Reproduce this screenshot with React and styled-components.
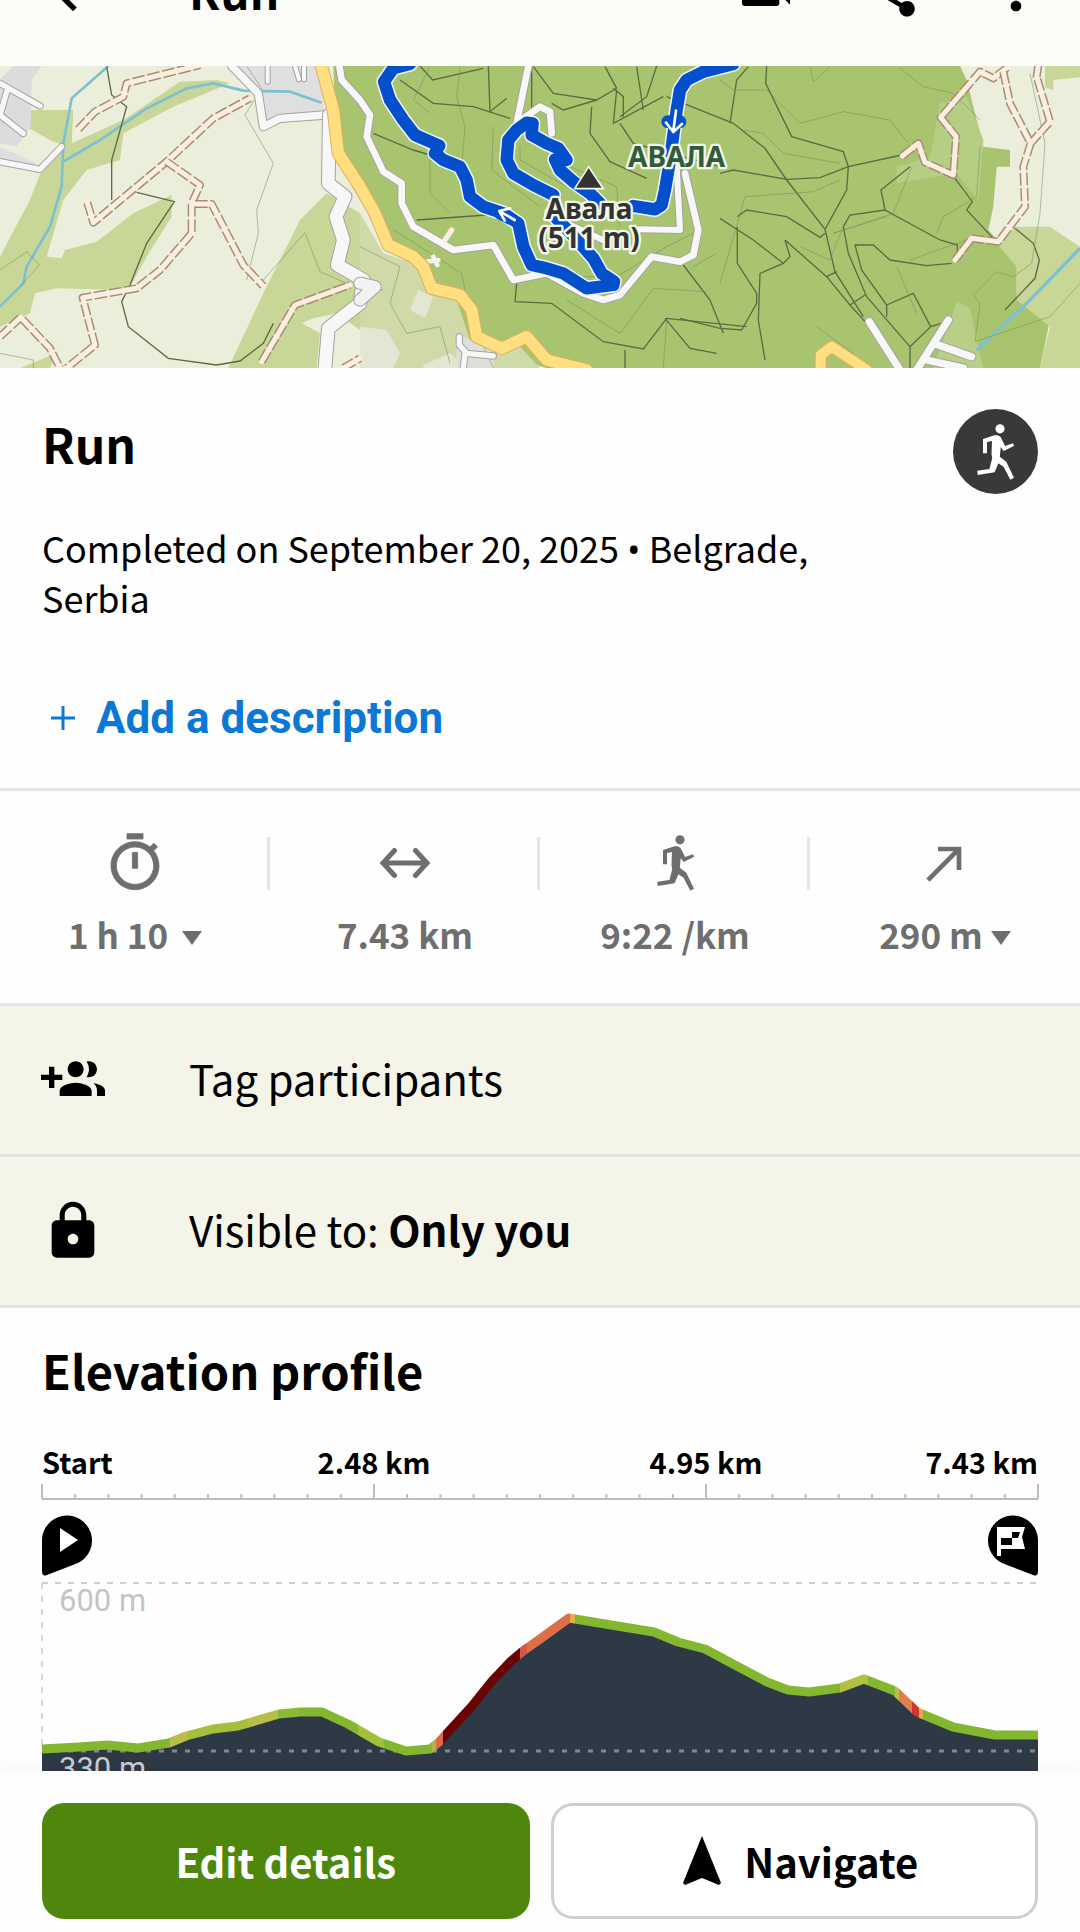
import React from 'react';
import styled, { createGlobalStyle } from 'styled-components';
import {
  MdArrowBack,
  MdVideocam,
  MdShare,
  MdMoreVert,
} from 'react-icons/md';

const GlobalStyle = createGlobalStyle`
  * {
    box-sizing: border-box;
  }
  body {
    margin: 0;
    background: #fefefe;
    color: #000;
    font-family: "Noto Sans CJK SC", "Noto Sans", sans-serif;
  }
  button {
    margin: 0;
    padding: 0;
    border: 0;
    background: none;
    color: inherit;
    font: inherit;
    cursor: pointer;
  }
  h1, h2, p, ul {
    margin: 0;
    padding: 0;
  }
  svg {
    display: block;
  }
`;

const Screen = styled.div`
  display: flex;
  flex-direction: column;
  height: 100vh;
`;

const TopBar = styled.header`
  flex: none;
  display: flex;
  align-items: flex-end;
  height: 66px;
  padding: 0 32px 44px 41px;
  background: #fdfcf9;
  overflow: hidden;
`;

const BarTitle = styled.p`
  flex: 1;
  padding-left: 84px;
  font-size: 46px;
  line-height: 64px;
  font-weight: 700;
`;

const BarActions = styled.div`
  display: flex;
  gap: 61px;
`;

const Content = styled.main`
  flex: 1;
  min-height: 0;
  overflow: hidden;
`;

const MapSvg = styled.svg`
  width: 100%;
  height: auto;
`;

const Summary = styled.section`
  padding: 41px 42px 42px;
  border-bottom: 3px solid #e5e5e5;
`;

const TitleRow = styled.div`
  display: flex;
  justify-content: space-between;
  align-items: flex-start;
`;

const Title = styled.h1`
  font-size: 48px;
  line-height: 68px;
  font-weight: 700;
`;

const Badge = styled.span`
  display: flex;
  align-items: center;
  justify-content: center;
  width: 85px;
  height: 85px;
  border-radius: 50%;
  background: #393939;
  color: #fff;
`;

const Subtitle = styled.p`
  max-width: 800px;
  margin-top: 28px;
  font-size: 36px;
  line-height: 50px;
`;

const Dot = styled.span`
  font-family: "Open Sans", sans-serif;
  line-height: 1;
`;

const AddButton = styled.button`
  display: flex;
  align-items: center;
  gap: 20px;
  margin-top: 68px;
  padding-left: 8px;
  color: #0b78d6;
  font-family: Roboto, sans-serif;
  font-size: 44px;
  line-height: 56px;
  font-weight: 700;
`;

const Stats = styled.ul`
  display: grid;
  grid-template-columns: repeat(4, 1fr);
  padding: 40px 0 36px;
  border-bottom: 3px solid #e5e5e5;
  list-style: none;
  color: #6e6e6e;
`;

const Stat = styled.li`
  display: flex;
  flex-direction: column;
  align-items: center;
`;

const StatIcon = styled.div`
  display: flex;
  align-items: center;
  justify-content: center;
  align-self: stretch;
  height: 64px;
  background: ${({ $last }) =>
    $last
      ? 'none'
      : 'linear-gradient(#e5e5e5, #e5e5e5) right center / 3px 53px no-repeat'};
`;

const StatValue = styled.div`
  display: flex;
  align-items: center;
  gap: ${({ $gap }) => $gap || 0}px;
  margin-top: 6px;
  font-size: 35px;
  line-height: 66px;
  font-weight: 700;

  svg {
    margin-top: 8px;
  }
`;

const OptionRow = styled.button`
  display: flex;
  align-items: center;
  gap: 84px;
  width: 100%;
  padding: 42px 41px;
  border-bottom: 3px solid #e4e4de;
  background: #f4f4e8;
  font-size: 42px;
  line-height: 60px;
  text-align: left;
`;

const OptionText = styled.span`
  padding-bottom: 4px;
`;

const Elevation = styled.section`
  padding: 28px 42px 0;
`;

const SectionTitle = styled.h2`
  margin-bottom: 36px;
  font-size: 47px;
  line-height: 68px;
  font-weight: 700;
`;

const ChartSvg = styled.svg`
  width: 100%;
  height: auto;
  overflow: visible;
`;

const AxisLabel = styled.text`
  font-size: 29px;
  font-weight: 700;
`;

const LevelLabel = styled.text`
  font-family: Roboto, sans-serif;
  font-size: 31px;
  fill: ${({ $inside }) => ($inside ? '#c9cdd0' : '#c4c4c4')};
`;

const Markers = styled.div`
  display: flex;
  justify-content: space-between;
  margin: 15px 0 3px;
`;

const Footer = styled.footer`
  flex: none;
  display: grid;
  grid-template-columns: 1fr 1fr;
  gap: 21px;
  padding: 32px 42px 13px;
  background: #fefefe;
  box-shadow: 0 -4px 12px rgba(0, 0, 0, 0.03);
`;

const FooterButton = styled.button`
  display: flex;
  align-items: center;
  justify-content: center;
  gap: 22px;
  height: 116px;
  border-radius: 22px;
  font-size: 40px;
  font-weight: 700;
`;

const PrimaryButton = styled(FooterButton)`
  background: #4f870d;
  color: #fff;
`;

const OutlineButton = styled(FooterButton)`
  padding-left: 12px;
  border: 3px solid #cfcfcf;
  background: #fff;
`;

const MapLabel = styled.text`
  font-family: "Noto Sans", sans-serif;
  font-weight: 700;
  font-size: 84px;
  text-anchor: middle;
  paint-order: stroke;
  stroke: #f4f7ea;
  stroke-width: 14px;
  stroke-linejoin: round;
  fill: ${({ $fill }) => $fill};
`;

const RunnerIcon = () => (
  <svg width="37" height="56" viewBox="0 0 37 56" fill="currentColor">
    <circle cx="23" cy="4.8" r="4.6" />
    <path d="M6 15 17.5 11.3 20.5 11.3 23.4 12.7 26 17.7 28 22 36 19.3 37 22 26.5 27 23.8 23 22.8 32.7 29.3 37.7 37 53.7 33.4 55.7 26.5 42.7 21.4 39.3 17.6 48.3 .7 51 .3 46.7 12.4 45 15.2 34.3 14.5 30 15 17 10 18 10 29.3 6 29.3Z" />
  </svg>
);

const TimerIcon = () => (
  <svg width="64" height="64" viewBox="0 0 24 24" fill="currentColor" stroke="currentColor" strokeWidth="0.3">
    <path d="M15 1H9v2h6V1zm-4 13h2V8h-2v6zm8.03-6.61 1.42-1.42c-.43-.51-.9-.99-1.41-1.41l-1.42 1.42C16.07 4.74 14.12 4 12 4c-4.97 0-9 4.03-9 9s4.02 9 9 9 9-4.03 9-9c0-2.12-.74-4.07-1.97-5.61zM12 20c-3.87 0-7-3.13-7-7s3.13-7 7-7 7 3.13 7 7-3.13 7-7 7z" />
  </svg>
);

const DistanceIcon = () => (
  <svg width="52" height="32" viewBox="0 0 52 32" fill="none" stroke="currentColor" strokeWidth="5" strokeLinecap="round">
    <path d="M6 16H46M15.5 3.5 4 16 15.5 28.5M36.5 3.5 48 16 36.5 28.5" />
  </svg>
);

const ClimbIcon = () => (
  <svg width="56" height="56" viewBox="0 0 24 24" fill="currentColor">
    <path d="M9 5v2h6.59L4 18.59 5.41 20 17 8.41V15h2V5z" />
  </svg>
);

const Caret = () => (
  <svg width="20" height="14" viewBox="0 0 20 14" fill="currentColor">
    <path d="M0 0H20L10 14Z" />
  </svg>
);

const PlusIcon = () => (
  <svg width="26" height="26" viewBox="0 0 26 26" fill="none" stroke="currentColor" strokeWidth="3">
    <path d="M13 1V25M1 13H25" />
  </svg>
);

const TagPeopleIcon = () => (
  <svg width="64" height="64" viewBox="0 0 24 24">
    <path d="M8 10H5V7H3v3H0v2h3v3h2v-3h3v-2zm10 1c1.66 0 2.99-1.34 2.99-3S19.66 5 18 5c-.32 0-.63.05-.91.14.57.81.9 1.79.9 2.86s-.34 2.04-.9 2.86c.28.09.59.14.91.14zm-5 0c1.66 0 2.99-1.34 2.99-3S14.66 5 13 5s-3 1.34-3 3 1.34 3 3 3zm6.62 2.16c.83.73 1.38 1.66 1.38 2.84v2h3v-2c0-1.54-2.37-2.49-4.38-2.84zM13 13c-2 0-6 1-6 3v2h12v-2c0-2-4-3-6-3z" />
  </svg>
);

const LockIcon = () => (
  <svg width="64" height="64" viewBox="0 0 24 24">
    <path d="M18 8h-1V6c0-2.76-2.24-5-5-5S7 3.24 7 6v2H6c-1.1 0-2 .9-2 2v10c0 1.1.9 2 2 2h12c1.1 0 2-.9 2-2V10c0-1.1-.9-2-2-2zm-6 9c-1.1 0-2-.9-2-2s.9-2 2-2 2 .9 2 2-.9 2-2 2zm3.1-9H8.9V6c0-1.71 1.39-3.1 3.1-3.1 1.71 0 3.1 1.39 3.1 3.1v2z" />
  </svg>
);

const StartPin = () => (
  <svg width="51" height="61" viewBox="0 0 51 61">
    <path d="M0 25a25 25 0 1 1 36 23L5 60Q0 62 0 56Z" />
    <path d="M18 13 36 25 18 37Z" fill="#fff" />
  </svg>
);

const FinishPin = () => (
  <svg width="51" height="61" viewBox="0 0 51 61">
    <path d="M51 25a25 25 0 1 0-36 23L46 60Q51 62 51 56Z" />
    <path d="M10 12H38L35 22 38 34H14V41H10Z" fill="#fff" />
    <path d="M25 17H33L31 23H25ZM14 23H25V30H14Z" />
  </svg>
);

const NavigateIcon = () => (
  <svg width="40" height="50" viewBox="0 0 40 50">
    <path d="M20 0 39 47 37 49 20 42 3 49 1 47Z" />
  </svg>
);

/* Map layers. Units are a third of a css pixel. */

const FIELDS = '#ebeedb';
const WOOD = '#c8d798';
const FOREST = '#a9c46f';

const woods = [
  'M75 330H220L215 430 370 360 540 245 650 240 690 250 520 320 370 400 360 480 260 510 190 600 140 770 185 775 195 750 290 725 400 640 515 585 515 650 440 770 390 860 370 870 170 865 105 880 90 940 0 980V770L90 600 125 510 200 440 150 420 60 370Z',
  'M980 580 1080 640V990L1010 940 940 955 905 970 960 1000 950 1104H685L790 880 900 660Z',
  'M60 1104 170 1060 150 1104Z',
];

const tracks = [
  'M235 388 285 335 370 290 380 250 600 195',
  'M262 608 280 668 500 485 640 355 750 295',
  'M500 485 600 555 575 610 575 700 480 810 410 865 248 893 285 1035 200 1104',
  'M585 612 635 612 730 795 790 858',
  'M0 1010 62 952 150 1045 180 1104',
  'M785 1085 885 915 1050 855',
  'M1030 1104 1080 1075',
];

const tracksEast = [
  'M547 468 595 430 615 487 700 525 708 410 662 352 780 215 820 235 865 200',
  'M850 215 870 310 932 430 990 365 950 230 955 195',
  'M932 430 910 500 915 620 835 725 755 715 705 780',
];

const roads = [
  { d: 'M0 250 120 318M20 275 0 345 70 400M0 485 120 508 185 440', w: 16 },
  { d: 'M695 198 775 280 790 380 840 355 975 345', w: 22 },
  { d: 'M803 198V245M885 198 897 238M912 198V238', w: 12 },
  { d: 'M988 345 985 550 1035 590 1008 650 1030 720 1012 795 1090 840 1080 910 985 985 975 1104', w: 38 },
  { d: 'M1018 198 1025 240 1080 300 1110 345 1100 410 1150 515 1205 550 1205 610 1240 680 1360 750 1480 735 1540 840 1640 820 1750 880 1810 900 1860 885 1955 770 2040 785 2080 765 2095 690 2055 520', w: 20 },
  { d: 'M1585 198 1550 370 1620 320 1650 335 1655 400', w: 20 },
  { d: 'M2030 500 2040 690 1920 688M1700 670 1820 725', w: 18 },
];

const footpaths = [
  'M320 200 335 285 380 320 335 480V600M410 577 523 605 440 730 390 855 365 905 385 980 505 1075 650 1095 720 1083 790 1030 820 970',
  'M1200 240 1300 310 1420 320 1530 355M1120 400 1240 450 1290 465M1250 660 1460 645M1260 198 1298 240 1450 205',
  'M1465 198 1470 335 1520 295M1595 198V400M1600 200 1660 280 1790 300 1850 265 1815 200M1790 300 1690 330 1655 310',
  'M1850 270 1840 370 1990 290M1840 265 1870 290 1870 350M1910 200 1930 330M1970 198 1940 290 1860 350',
  'M1775 320 1770 400 1830 485 1940 535M1860 370 1900 430 2160 500',
  'M1550 850 1545 905 1655 910 1810 1025 1930 1047 2000 955 2240 980M1995 955 2070 1045 2150 1060M2050 795 2130 900 2170 1000M1875 1050V1104',
  'M2000 290 2200 370 2295 445 2360 540 2475 688 2505 815 2590 950M2190 370 2210 240 2245 200M2300 198 2297 250 2375 410 2530 455 2545 500 2540 570 2475 688',
  'M2160 520 2200 510 2360 538 2460 533 2545 500 2705 465M2160 655 2260 720 2350 790M2212 680V790L2270 880V910L2225 990 2160 985',
  'M2212 650 2240 630 2360 650 2460 712 2475 700M2355 720 2370 770 2350 790 2280 820 2275 960 2295 1080M2355 720 2480 830 2550 915 2595 965M2480 830 2510 815M2550 915 2595 885',
  'M2865 535 2917 605 2900 630 2980 715M2730 500 2643 570 2655 630 2820 720 2872 735V760M2655 630 2550 645 2530 680 2545 760 2600 890 2730 1040V1104M2855 790 2780 797 2670 780 2620 735H2565L2585 810 2660 915V950M2660 915 2740 880 2792 980 2730 1040M2792 980 2840 965',
  'M3045 685 3100 730 3118 780 3105 835 3015 930M2040 955 2160 985',
];

const faintPaths = [
  'M740 198 785 265 735 345 820 490 770 630 775 700 740 840M790 840 915 698 960 815 1040 850M0 810 80 755 118 795 60 860M0 1060 100 1080V1104',
  'M1380 200 1370 290 1395 380 1385 500M1290 200 1240 300 1290 340M1480 380 1475 510 1620 620M1290 460V580L1350 640M1560 440 1560 480 1700 560M1640 470 1850 560 1860 680',
  'M1180 690 1260 740 1385 820 1410 950 1480 1104M1670 830 1850 830 2000 740 2080 700M1700 900 1860 1000 1960 865 2120 875M2080 800 2150 760',
  'M1080 740 1200 800 1170 910 1220 1000 1320 980 1350 1090M2000 960 1990 1104M1080 860 1150 870',
  'M2160 240 2200 270H2300L2400 370 2530 335 2670 360 2725 430M2230 390 2290 400 2350 460 2520 490M2430 200 2440 245 2490 200M2700 205 2770 260 2860 280 2940 360M2235 590 2440 575 2520 540',
  'M2160 850 2235 590M2940 440 2930 590 2830 650 2810 700M2735 500 2680 640 2500 700 2660 650M2690 800 2750 940M3090 220 3135 430 3120 640 3095 790 3040 830 2990 815 2920 885 2940 910 2925 1025 3150 950 3240 850',
  'M2400 740 2490 780 2530 680M2450 980 2560 1060M2900 720 2730 780',
];

const Cased = ({ d, width, color, casing }) => (
  <>
    <path d={d} stroke={casing} strokeWidth={width + 6} />
    <path d={d} stroke={color} strokeWidth={width} />
  </>
);

const Track = ({ d }) => (
  <>
    <path d={d} stroke="#a68d72" strokeWidth="24" strokeDasharray="38 8" strokeLinecap="butt" />
    <path d={d} stroke="#fbeee0" strokeWidth="15" />
  </>
);

const routes = [
  'M1230 192 1180 205 1152 245 1170 300 1210 360 1245 405 1290 425 1318 437 1305 460 1330 480 1380 500 1400 540 1410 590 1450 620 1510 640 1555 670 1570 740 1595 795 1640 805 1690 820 1760 865 1840 855 1842 845 1805 820 1780 775 1740 730 1655 640',
  'M1660 585 1600 555 1540 520 1520 480 1525 420 1550 390 1580 368 1598 370 1595 405 1640 430 1675 445 1700 480 1665 478 1680 510 1720 545 1770 580 1800 610',
  'M2200 192 2110 215 2060 240 2040 270 2030 330 2010 480 1995 570 1985 615 1965 628 1900 618',
];

function TrailMap() {
  return (
    <MapSvg viewBox="0 198 3240 906" role="img" aria-label="Route map">
      <rect y="198" width="3240" height="906" fill={FIELDS} />
      {woods.map(d => (
        <path key={d} d={d} fill={WOOD} />
      ))}
      <path d="M40 198H125L95 240 92 380 50 440 0 430V240Z" fill="#dcdcdc" />
      <path d="M0 440 110 490 95 505 0 490ZM690 198H950L975 335 800 375 780 290Z" fill="#dfdfdf" />

      <path d="M1000 198H2880L2900 240 2950 440 3030 450V500H2990L2980 620 2965 690 3010 740 3050 800V880L3150 960 3120 1104H1640L1420 1040 1280 870 1200 760 1080 600 1010 480Z" fill={FOREST} />
      <path d="M1080 640 1150 760 1240 790 1290 870 1370 900 1420 1050 1560 1040 1620 1104H1080Z" fill="#cfdaa8" />
      <path d="M1080 980 1160 990 1200 1060 1180 1104H1080ZM1255 870 1300 890 1275 955 1230 930ZM1270 1095 1350 1060 1400 1104H1270Z" fill="#e4e6d3" />
      <path d="M1370 1000 1480 1055V1104H1370Z" fill="#dedfd8" />
      <path d="M3045 680H3150L3240 740V1104H3120L3150 980 3050 900V800L2990 730Z" fill={WOOD} />
      <path d="M3135 198H3240V232L3160 240V270L3135 262Z" fill={WOOD} />
      <path d="M2820 310 2900 290 2950 420 2935 600 2870 520 2690 550 2690 500 2790 470Z" fill="#b5ce83" />
      <path d="M2870 905 2910 925 2925 1000 2950 1104H2800Z" fill="#b9cf88" />

      <g fill="none" stroke="#7cc0d2">
        <path d="M325 198 215 295 190 430 185 560 150 680 80 800 70 850 0 920" strokeWidth="8" />
        <path d="M190 485 300 420 440 325 560 265 640 250 730 272 870 275 965 308" strokeWidth="8" />
        <path d="M3240 745 3080 910 2930 1050" strokeWidth="10" />
      </g>

      <g fill="none" stroke="#5c6b42" strokeWidth="4">
        {footpaths.map(d => (
          <path key={d} d={d} />
        ))}
      </g>
      <g fill="none" stroke="#7d8a5e" strokeWidth="2" opacity="0.8">
        {faintPaths.map(d => (
          <path key={d} d={d} />
        ))}
      </g>

      <g fill="none" strokeLinecap="round" strokeLinejoin="round">
        {tracks.map(d => (
          <Track key={d} d={d} />
        ))}
        <g transform="translate(2160)">
          {tracksEast.map(d => (
            <Track key={d} d={d} />
          ))}
        </g>
        {roads.map(({ d, w }) => (
          <Cased key={d} d={d} width={w} color="#f7f7f7" casing="#a3a3a3" />
        ))}
        <Cased
          d="M2608 965 2700 1110M2845 960 2750 1110M2800 1030 2915 1070M2780 1080 2890 1104"
          width={22}
          color="#f7f7f7"
          casing="#a3a3a3"
        />
        <Cased d="M1378 1010V1035L1400 1060 1480 1068M1395 1060 1390 1104" width={16} color="#f7f7f7" casing="#a3a3a3" />
        <Cased d="M1080 850 1125 860 1080 900" width={34} color="#f2f2f2" casing="#a3a3a3" />
        <path d="M1280 785 1315 780M1300 770 1312 795" stroke="#f2f2f2" strokeWidth="14" />
        <path d="M1335 720 1355 690" stroke="#fbeee0" strokeWidth="16" />
        <Cased
          d="M962 190 1000 330 1015 460 1080 560 1125 640 1165 735 1240 770 1270 800 1295 865 1380 885 1415 930 1430 1010 1505 1045 1580 1010 1640 1080 1760 1110"
          width={34}
          color="#ffdf80"
          casing="#dfae5c"
        />
        <Cased d="M2462 1115V1065L2495 1040 2600 1110" width={30} color="#ffdf80" casing="#dfae5c" />

        <g stroke="#f2f6fb" strokeWidth="46">
          {routes.map(d => (
            <path key={d} d={d} />
          ))}
        </g>
        <g stroke="#0450cc" strokeWidth="37">
          {routes.map(d => (
            <path key={d} d={d} />
          ))}
        </g>
        <path d="M2003 365H2040M1500 640 1530 655" stroke="#0450cc" strokeWidth="38" />
        <path
          d="M2028 332 2020 392M1998 368 2020 396 2046 372M1544 660 1500 634M1514 662 1498 633 1530 625"
          stroke="#fff"
          strokeWidth="8"
        />
      </g>

      <path d="M1766 500 1810 566H1724Z" fill="#333" stroke="#f4f7ea" strokeWidth="5" />
      <MapLabel x="2030" y="500" $fill="#2f5c3a">АВАЛА</MapLabel>
      <MapLabel $fill="#333">
        <tspan x="1767" y="656">Авала</tspan>
        <tspan x="1767" y="744">(511 m)</tspan>
      </MapLabel>
    </MapSvg>
  );
}

const profile =
  'M0 170 37 168 65 166 96 169 127 164 144 157 171 150 196 147 213 142 237 135 258 133 280 133 306 145 337 163 364 172 388 170 397 163 430 127 450 102 468 83 481 72 498 60 527 39 563 45 612 53 636 63 663 70 691 85 725 103 746 111 767 113 798 109 822 100 853 112 875 133 911 148 953 156 996 156';

// [x, colour] pairs, steeper parts are warmer
const slopes = [
  [0, '#83b72f'],
  [128, '#b9bd4a'],
  [146, '#a3bf3b'],
  [206, '#b9bd4a'],
  [236, '#8dba33'],
  [258, '#83b72f'],
  [316, '#a0bf3b'],
  [342, '#83b72f'],
  [390, '#b5b24a'],
  [394, '#dc6b47'],
  [401, '#6a0303'],
  [478, '#d3593f'],
  [485, '#dd6f48'],
  [528, '#dfb04f'],
  [533, '#83b72f'],
  [798, '#b3bf45'],
  [826, '#83b72f'],
  [853, '#b9bd4a'],
  [857, '#dd8148'],
  [870, '#d8302c'],
  [877, '#dfb04f'],
  [881, '#83b72f'],
  [996, '#83b72f'],
];

const axisTicks = Array.from({ length: 31 }, (_, i) => i);

function DistanceAxis() {
  return (
    <ChartSvg viewBox="0 0 996 60" role="img" aria-label="Distance">
      <AxisLabel x="0" y="34">Start</AxisLabel>
      <AxisLabel x="332" y="34" textAnchor="middle">2.48 km</AxisLabel>
      <AxisLabel x="664" y="34" textAnchor="middle">4.95 km</AxisLabel>
      <AxisLabel x="996" y="34" textAnchor="end">7.43 km</AxisLabel>
      <g stroke="#bdbdbd" strokeWidth="2">
        <path d="M0 59H996" />
        {axisTicks.map(i => (
          <path key={i} d={`M${i * 33.2} ${i % 10 ? 54 : 44}V59`} />
        ))}
      </g>
    </ChartSvg>
  );
}

function ElevationChart() {
  return (
    <ChartSvg viewBox="0 0 996 260" role="img" aria-label="Elevation by distance">
      <defs>
        <linearGradient id="slope" gradientUnits="userSpaceOnUse" x1="0" y1="0" x2="996" y2="0">
          {slopes.slice(0, -1).map(([x, color], i) => (
            <React.Fragment key={x}>
              <stop offset={x / 996} stopColor={color} />
              <stop offset={slopes[i + 1][0] / 996} stopColor={color} />
            </React.Fragment>
          ))}
        </linearGradient>
      </defs>
      <path d="M0 4H996" stroke="#cfcfcf" strokeWidth="2" strokeDasharray="6 7" />
      <path d="M0 4V166" stroke="#d6d6d6" strokeWidth="2" strokeDasharray="6 7" />
      <LevelLabel x="17" y="32">600 m</LevelLabel>
      <path d={`${profile}V260H0Z`} fill="#2d3945" />
      <path d="M0 172H996" stroke="#7f8890" strokeWidth="3" strokeDasharray="5 8" />
      <path d={profile} fill="none" stroke="url(#slope)" strokeWidth="9" strokeLinejoin="round" />
      <LevelLabel x="17" y="200" $inside>330 m</LevelLabel>
    </ChartSvg>
  );
}

export default function App() {
  return (
    <Screen>
      <GlobalStyle />
      <TopBar>
        <button aria-label="Back"><MdArrowBack size={64} /></button>
        <BarTitle>Run</BarTitle>
        <BarActions>
          <button aria-label="Video"><MdVideocam size={64} /></button>
          <button aria-label="Share"><MdShare size={64} /></button>
          <button aria-label="More"><MdMoreVert size={64} /></button>
        </BarActions>
      </TopBar>

      <Content>
        <TrailMap />

        <Summary>
          <TitleRow>
            <Title>Run</Title>
            <Badge><RunnerIcon /></Badge>
          </TitleRow>
          <Subtitle>
            Completed on September 20, 2025 <Dot>•</Dot> Belgrade, Serbia
          </Subtitle>
          <AddButton><PlusIcon />Add a description</AddButton>
        </Summary>

        <Stats>
          <Stat>
            <StatIcon><TimerIcon /></StatIcon>
            <StatValue as="button" $gap={14}>1 h 10 <Caret /></StatValue>
          </Stat>
          <Stat>
            <StatIcon><DistanceIcon /></StatIcon>
            <StatValue>7.43 km</StatValue>
          </Stat>
          <Stat>
            <StatIcon><RunnerIcon /></StatIcon>
            <StatValue>9:22 /km</StatValue>
          </Stat>
          <Stat>
            <StatIcon $last><ClimbIcon /></StatIcon>
            <StatValue as="button" $gap={8}>290 m <Caret /></StatValue>
          </Stat>
        </Stats>

        <OptionRow>
          <TagPeopleIcon />
          <OptionText>Tag participants</OptionText>
        </OptionRow>
        <OptionRow>
          <LockIcon />
          <OptionText>Visible to: <b>Only you</b></OptionText>
        </OptionRow>

        <Elevation>
          <SectionTitle>Elevation profile</SectionTitle>
          <DistanceAxis />
          <Markers>
            <StartPin />
            <FinishPin />
          </Markers>
          <ElevationChart />
        </Elevation>
      </Content>

      <Footer>
        <PrimaryButton>Edit details</PrimaryButton>
        <OutlineButton><NavigateIcon />Navigate</OutlineButton>
      </Footer>
    </Screen>
  );
}
